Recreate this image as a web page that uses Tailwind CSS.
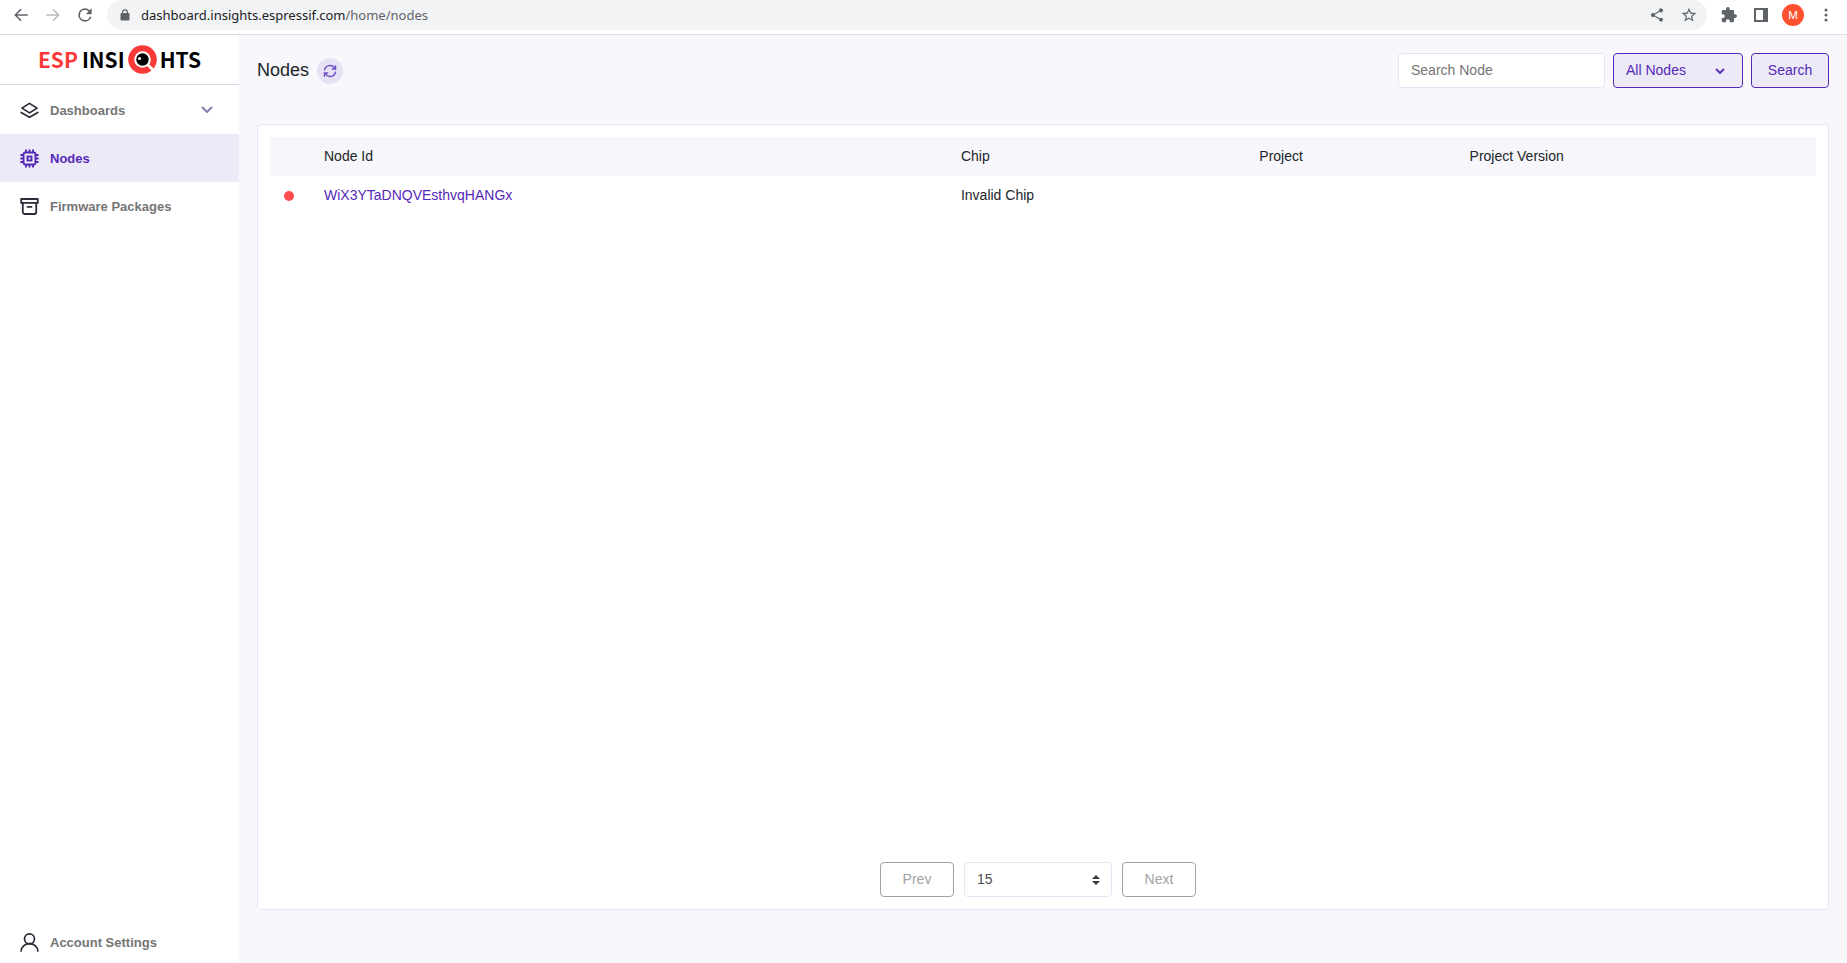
<!DOCTYPE html>
<html lang="en">

<head>
    <meta charset="UTF-8">
    <meta name="viewport" content="width=device-width, initial-scale=1.0">
    <title>Nodes - ESP Insights</title>
    <script src="https://cdn.jsdelivr.net/npm/@tailwindcss/browser@4"></script>
</head>

<body class="min-h-screen flex flex-col bg-[#f7f7fc] font-['Liberation_Sans',Arial,sans-serif] text-sm/[21px] text-[#212529]">

    <!-- browser toolbar -->
    <header class="flex items-center h-[35px] pb-1 pl-3 pr-[13px] bg-white border-b border-[#dadce0] text-[#5f6368]">
        <button class="w-[18px]" aria-label="Back">
            <svg class="size-[18px]" viewBox="0 0 24 24" fill="currentColor"><path d="M21 11H6.8l6-6L11.300 3.600 3 12l8.300 8.400 1.500-1.400-6-6H21z"/></svg>
        </button>
        <button class="w-[18px] ml-[14px] text-[#babcbe]" aria-label="Forward">
            <svg class="size-[18px]" viewBox="0 0 24 24" fill="currentColor"><path d="M3 11h14.200l-6-6 1.500-1.400L21 12l-8.300 8.400-1.500-1.400 6-6H3z"/></svg>
        </button>
        <button class="w-5 ml-[13px]" aria-label="Reload">
            <svg class="size-5" viewBox="0 0 24 24" fill="currentColor"><path d="M17.650 6.350A7.960 7.960 0 0 0 12 4a8 8 0 1 0 7.730 10h-2.080A6 6 0 1 1 12 6c1.660 0 3.140.690 4.220 1.780L13 11h7V4z"/></svg>
        </button>
        <div class="flex flex-1 items-center h-[30px] ml-3 pl-3 pr-[10px] rounded-full bg-[#f1f3f4]">
            <svg class="size-3" viewBox="0 0 24 24" fill="currentColor"><path d="M19 8h-1V6.500a6 6 0 0 0-12 0V8H5a2 2 0 0 0-2 2v11a2 2 0 0 0 2 2h14a2 2 0 0 0 2-2V10a2 2 0 0 0-2-2zM8.300 6.500a3.700 3.700 0 0 1 7.400 0V8H8.300z"/></svg>
            <p class="ml-[10px] flex-1 font-['Noto_Sans',sans-serif] text-[13px]"><span class="text-[#202124]">dashboard.insights.espressif.com</span>/home/nodes</p>
            <button class="w-4" aria-label="Share">
                <svg class="size-4" viewBox="0 0 24 24" fill="currentColor"><path d="M18 16.080c-.760 0-1.440.300-1.960.770L8.910 12.700a3.300 3.300 0 0 0 0-1.400l7.050-4.110A3 3 0 1 0 15 5c0 .240.040.470.090.700L8.040 9.810a3 3 0 1 0 0 4.380l7.120 4.160A2.920 2.920 0 1 0 18 16.080z"/></svg>
            </button>
            <button class="w-4 ml-4" aria-label="Bookmark this page">
                <svg class="size-4" viewBox="1 1 22 22" fill="currentColor"><path d="M22 9.240l-7.190-.620L12 2 9.190 8.630 2 9.240l5.460 4.730L5.820 21 12 17.270 18.180 21l-1.630-7.030zM12 15.400l-3.760 2.270 1-4.280-3.320-2.880 4.380-.380L12 6.100l1.710 4.040 4.380.380-3.320 2.880 1 4.280z"/></svg>
            </button>
        </div>
        <button class="w-4 ml-[14px]" aria-label="Extensions">
            <svg class="size-4" viewBox="1 1 22 22" fill="currentColor"><path d="M20.500 11H19V7a2 2 0 0 0-2-2h-4V3.500a2.500 2.500 0 0 0-5 0V5H4a2 2 0 0 0-2 2v3.800h1.500a2.700 2.700 0 0 1 0 5.400H2V20a2 2 0 0 0 2 2h3.800v-1.500a2.700 2.700 0 0 1 5.400 0V22H17a2 2 0 0 0 2-2v-4h1.500a2.500 2.500 0 0 0 0-5z"/></svg>
        </button>
        <button class="w-[14px] ml-[17px]" aria-label="Side panel">
            <svg class="size-[14px]" viewBox="0 0 14 14" fill="currentColor"><path d="M0 0h14v14H0zM2 2v10h7V2z" fill-rule="evenodd"/></svg>
        </button>
        <button class="size-[22px] ml-[14px] rounded-full bg-[#ff512f] text-white text-[11px] leading-none font-[Roboto,sans-serif]">M</button>
        <button class="w-4 ml-[14px]" aria-label="Menu">
            <svg class="size-4" viewBox="0 0 16 16" fill="currentColor"><circle cx="8" cy="3" r="1.500"/><circle cx="8" cy="8" r="1.500"/><circle cx="8" cy="13" r="1.500"/></svg>
        </button>
    </header>

    <div class="flex flex-1">

        <!-- sidebar -->
        <aside class="flex flex-col w-[239px] shrink-0 bg-white">
            <a href="#" class="flex items-center justify-center h-[50px] border-b border-[#dcd8ec] font-['Noto_Sans_CJK_SC',sans-serif] font-bold text-[21px] leading-none text-black">
                <span class="text-[#f93a37]">ESP</span>
                <span class="ml-1">INSI</span>
                <svg class="size-[29px] mx-[3px]" viewBox="0 0 29 29" aria-label="G">
                    <circle cx="14.500" cy="14.500" r="14.300" fill="#f93a37"/>
                    <circle cx="14.500" cy="14.500" r="8.300" fill="#fff"/>
                    <path d="M19.500 19.500l5.500 5.500" stroke="#fff" stroke-width="2.800"/>
                    <circle cx="14.500" cy="14.500" r="6.200" fill="#000"/>
                    <circle cx="11.500" cy="13.500" r="1.600" fill="#fff"/>
                </svg>
                <span>HTS</span>
            </a>

            <nav class="flex flex-col flex-1 pt-px font-bold text-[13px] text-[#757575]">
                <a href="#" class="flex items-center h-12 pl-5 pr-6">
                    <svg class="size-[19px] text-[#2b2b38]" viewBox="0 0 24 24" fill="none" stroke="currentColor" stroke-width="2.200" stroke-linejoin="round" stroke-linecap="round"><path d="M12 3L2.500 9 12 15l9.500-6zM1.500 14.500L12 20.500l10.500-6"/></svg>
                    <span class="ml-[11px] flex-1">Dashboards</span>
                    <svg class="size-4 text-[#8780b0]" viewBox="0 0 16 16" fill="none" stroke="currentColor" stroke-width="2" stroke-linecap="round" stroke-linejoin="round"><path d="M3.500 5.500L8 10l4.500-4.500"/></svg>
                </a>
                <a href="#" class="flex items-center h-12 pl-5 bg-[#edeaf7] text-[#5429b8]">
                    <svg class="size-[19px]" viewBox="0 0 24 24" fill="none" stroke="currentColor" stroke-width="2.400"><rect x="4.500" y="4.500" width="15" height="15" rx="2"/><rect x="9.500" y="9.500" width="5" height="5"/><path d="M7.500 .500V4M12 .500V4M16.500 .500V4M7.500 20v3.500M12 20v3.500M16.500 20v3.500M.500 7.500H4M.500 12H4M.500 16.500H4M20 7.500h3.500M20 12h3.500M20 16.500h3.500"/></svg>
                    <span class="ml-[11px]">Nodes</span>
                </a>
                <a href="#" class="flex items-center h-12 pl-5">
                    <svg class="size-[19px] text-[#2b2b38]" viewBox="0 0 24 24" fill="none" stroke="currentColor" stroke-width="2.300" stroke-linejoin="round" stroke-linecap="round"><path d="M1.500 2.500h21v5h-21zM3.500 7.500V19a2.500 2.500 0 0 0 2.500 2.500h12a2.500 2.500 0 0 0 2.500-2.500V7.500M9.500 12.500h5"/></svg>
                    <span class="ml-[11px]">Firmware Packages</span>
                </a>
                <a href="#" class="flex items-center h-[42px] pl-5 mt-auto">
                    <svg class="size-[19px] text-[#2b2b38]" viewBox="0 0 24 24" fill="none" stroke="currentColor" stroke-width="2.200" stroke-linecap="round"><circle cx="12" cy="7.500" r="6.300"/><path d="M1.500 22.700a10.500 9.200 0 0 1 21 0"/></svg>
                    <span class="ml-[11px]">Account Settings</span>
                </a>
            </nav>
        </aside>

        <main class="flex flex-col flex-1 px-[18px] pt-[18px] pb-[53px]">
            <div class="flex items-center h-[35px]">
                <h1 class="text-lg/[27px]">Nodes</h1>
                <button class="flex items-center justify-center size-[26px] ml-2 rounded-full bg-[#e6e2f4] text-[#6f4cc4]" aria-label="Refresh">
                    <svg class="size-[14px]" viewBox="0 0 24 24" fill="none" stroke="currentColor" stroke-width="2.400"><path d="M2.500 11A9.500 9.500 0 0 1 20 7M21.500 13A9.500 9.500 0 0 1 4 17M21.500 2v6.500H15M2.500 22v-6.500H9"/></svg>
                </button>
                <form class="flex gap-2 h-full ml-auto" onsubmit="return false">
                    <input type="text" placeholder="Search Node" aria-label="Search Node" class="w-[207px] px-3 pb-px bg-white border border-[#e1e8f5] rounded placeholder:text-[#757575]">
                    <div class="relative w-[130px] text-[#5429b8]">
                        <select aria-label="Filter nodes" class="appearance-none size-full px-3 pb-px bg-[#edeaf7] border border-[#5429b8] rounded">
                            <option>All Nodes</option>
                        </select>
                        <svg class="absolute right-4 top-[11px] size-[14px] pointer-events-none" viewBox="0 0 14 14" fill="none" stroke="currentColor" stroke-width="1.800"><path d="M3 5l4 4 4-4"/></svg>
                    </div>
                    <button class="w-[78px] pb-px bg-[#edeaf7] border border-[#5429b8] rounded text-[#5429b8]">Search</button>
                </form>
            </div>

            <section class="flex flex-col flex-1 mt-9 p-3 bg-white border border-[#e1e8f5] rounded">
                <table class="w-full table-fixed text-left">
                    <colgroup>
                        <col class="w-[46px]">
                        <col class="w-[41.2%]">
                        <col class="w-[19.3%]">
                        <col class="w-[13.6%]">
                        <col>
                    </colgroup>
                    <thead class="bg-[#f6f6fb]">
                        <tr class="h-[39px]">
                            <th></th>
                            <th class="px-2 font-normal">Node Id</th>
                            <th class="px-2 font-normal">Chip</th>
                            <th class="px-2 font-normal">Project</th>
                            <th class="px-2 font-normal">Project Version</th>
                        </tr>
                    </thead>
                    <tbody>
                        <tr class="h-[39px]">
                            <td class="pl-[14px]"><span class="block size-[10px] rounded-full bg-[#ff4d4f]"></span></td>
                            <td class="px-2"><a href="#" class="text-[#5429b8]">WiX3YTaDNQVEsthvqHANGx</a></td>
                            <td class="px-2">Invalid Chip</td>
                            <td></td>
                            <td></td>
                        </tr>
                    </tbody>
                </table>

                <div class="flex justify-center gap-[10px] h-[35px] mt-auto pr-[10px]">
                    <button disabled class="w-[74px] pb-px border border-[#a3a3a3] rounded text-[#a3a3a3]">Prev</button>
                    <div class="relative w-[148px]">
                        <select aria-label="Nodes per page" class="appearance-none size-full px-3 pb-px bg-white border border-[#e1e8f5] rounded text-[#495057]">
                            <option>15</option>
                        </select>
                        <svg class="absolute right-3 top-3 w-2 h-3 pointer-events-none" viewBox="0 0 8 12" fill="#343a40"><path d="M0 5l4-4 4 4zM0 7l4 4 4-4z"/></svg>
                    </div>
                    <button disabled class="w-[74px] pb-px border border-[#a3a3a3] rounded text-[#a3a3a3]">Next</button>
                </div>
            </section>
        </main>
    </div>
</body>

</html>
